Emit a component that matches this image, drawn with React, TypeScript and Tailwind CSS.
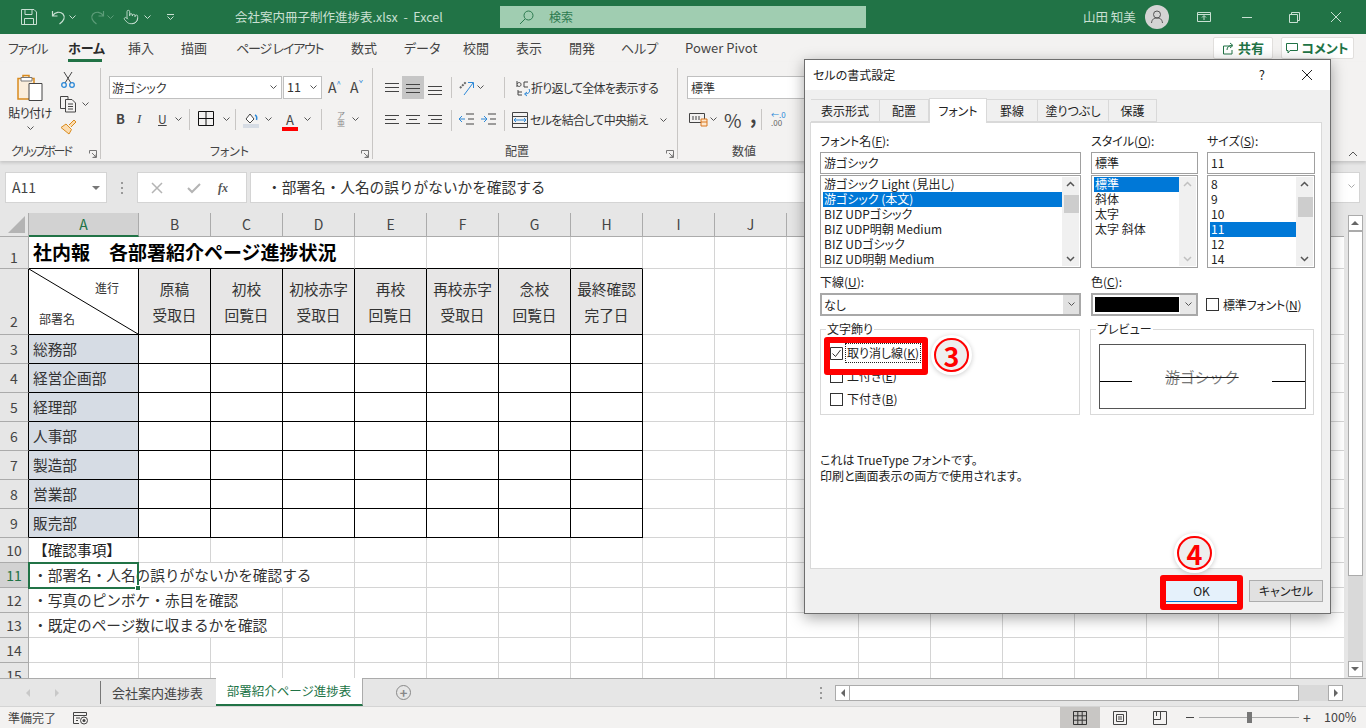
import type { ReactNode } from "react";
import { Pointer } from "lucide-react";

const jpFont = "font-['Noto_Sans_CJK_JP','Noto_Sans',sans-serif]";

// Small dropdown caret used all over the ribbon
const Chev = ({ className = "stroke-[#555]" }: { className?: string }) => (
  <svg width="7" height="5" viewBox="0 0 7 5" fill="none" className={className}>
    <path d="M0.5 0.5 L3.5 3.5 L6.5 0.5" strokeWidth="1" />
  </svg>
);

const Ico = ({ w = 16, h = 16, children }: { w?: number; h?: number; children: ReactNode }) => (
  <svg width={w} height={h} viewBox={`0 0 ${w} ${h}`} fill="none">
    {children}
  </svg>
);

const Lines = ({ ys, xs }: { ys: number[]; xs: [number, number][] }) => (
  <Ico w={16} h={16}>
    {ys.map((y, i) => (
      <path key={y} d={`M${xs[i][0]} ${y}.5H${xs[i][1]}`} stroke="#444" />
    ))}
  </Ico>
);

const TitleBar = () => (
  <div className="flex h-[34px] shrink-0 items-center bg-[#217346] text-[12px] text-[#c9e0d3]">
    <div className="flex w-[500px] items-center">
      <div className="ml-[21px] flex w-[30px]">
        <Ico>
          <path d="M.5.5H13L15.5 3V15.5H.5ZM4 .5V5.5H11V.5M3.5 15.5V9.5H12.5V15.5" stroke="#c9e0d3" />
        </Ico>
      </div>
      <div className="flex w-[38px] items-center gap-[2px]">
        <Ico>
          <path d="M1.5 2V7H6.5M1.5 7C4 3 9 2 12 5C14.5 8 13 12 8.5 15" stroke="#c9e0d3" strokeWidth="1.2" />
        </Ico>
        <Chev className="stroke-[#c9e0d3]" />
      </div>
      <div className="flex w-[34px] items-center gap-[2px]">
        <Ico>
          <path d="M14.5 2V7H9.5M14.5 7C12 3 7 2 4 5C1.5 8 3 12 7.5 15" stroke="#5c9c78" strokeWidth="1.2" />
        </Ico>
        <Chev className="stroke-[#5c9c78]" />
      </div>
      <div className="flex w-[41px] items-center gap-[5px]">
        <Pointer size={16} strokeWidth={1.3} color="#c9e0d3" />
        <Chev className="stroke-[#c9e0d3]" />
      </div>
      <div className="flex w-[13px] flex-col items-center gap-[1px]">
        <div className="h-px w-[7px] bg-[#c9e0d3]" />
        <Chev className="stroke-[#c9e0d3]" />
      </div>
      <div className="ml-[58px] whitespace-pre text-[12.5px]">会社案内冊子制作進捗表.xlsx  -  Excel</div>
    </div>
    <div className="flex h-[22px] w-[366px] items-center bg-[#a0cdb1] pl-[19px] text-[#2c7a4f]">
      <Ico w={15} h={15}>
        <circle cx="9.5" cy="5.5" r="4.5" stroke="#2c7a4f" />
        <path d="M6 9L1 14" stroke="#2c7a4f" />
      </Ico>
      <span className="ml-[15px]">検索</span>
    </div>
    <div className="ml-[217px] w-[62px] text-[12.5px]">山田 知美</div>
    <div className="flex h-[24px] w-[24px] items-center justify-center rounded-full bg-[#d4d4d4]">
      <Ico>
        <circle cx="8" cy="5.5" r="3.5" stroke="#555" />
        <path d="M2.5 14C3 10 5 9 8 9S13 10 13.5 14" stroke="#555" />
      </Ico>
    </div>
    <div className="ml-[28px] flex w-[45px]">
      <Ico w={14} h={14}>
        <path d="M.5 2.5H13.5V11.5H.5ZM.5 4.5H13.5M7 10V6M5 7.5L7 5.5L9 7.5" stroke="#c9e0d3" />
      </Ico>
    </div>
    <div className="h-px w-[10px] bg-[#c9e0d3]" />
    <div className="ml-[37px] flex w-[41px]">
      <Ico w={11} h={11}>
        <path d="M.5 2.5H8.5V10.5H.5ZM2.5 2.5V.5H10.5V8.5H8.5" stroke="#c9e0d3" />
      </Ico>
    </div>
    <Ico w={12} h={12}>
      <path d="M1 1L11 11M11 1L1 11" stroke="#c9e0d3" />
    </Ico>
  </div>
);

const tabs = [
  { t: "ファイル", w: "w-[60px] tracking-[-1.5px]" },
  { t: "ホーム", w: "w-[60px]", on: true },
  { t: "挿入", w: "w-[53px]" },
  { t: "描画", w: "w-[55px]" },
  { t: "ページ レイアウト", w: "w-[115px] tracking-[-1.2px]" },
  { t: "数式", w: "w-[53px]" },
  { t: "データ", w: "w-[59px]" },
  { t: "校閲", w: "w-[53px]" },
  { t: "表示", w: "w-[53px]" },
  { t: "開発", w: "w-[52px]" },
  { t: "ヘルプ", w: "w-[64px]" },
  { t: "Power Pivot", w: "w-[100px]" },
];

const TabBar = () => (
  <div className="flex h-[28px] shrink-0 items-center bg-[#f3f2f1] pl-[8px] text-[13px] text-[#444]">
    {tabs.map((x) => (
      <div key={x.t} className={`${x.w} relative flex h-full items-center whitespace-pre`}>
        <span className={x.on ? "font-bold text-[#2b2b2b]" : ""}>{x.t}</span>
        {x.on && <div className="absolute bottom-0 left-0 h-[3px] w-[34px] bg-[#217346]" />}
      </div>
    ))}
    <div className="ml-[428px] flex h-[22px] w-[60px] items-center justify-center gap-[4px] rounded-[2px] border border-[#e1dfdd] bg-white font-bold text-[#217346]">
      <Ico w={12} h={13}>
        <path d="M9 4H1.5V12H10V8M5 8C5 5 7 3.5 10 3.5M8 1L11 3.5L8 6" stroke="#217346" />
      </Ico>
      共有
    </div>
    <div className="ml-[8px] flex h-[22px] w-[73px] items-center justify-center gap-[3px] rounded-[2px] border border-[#e1dfdd] bg-white font-bold text-[#217346]">
      <Ico w={12} h={12}>
        <path d="M.5 1.5H11.5V8.5H4L2 11V8.5H.5Z" stroke="#217346" />
      </Ico>
      コメント
    </div>
  </div>
);

const RGroup = ({ w, label, labelCls = "", launcher, children }: { w: string; label: string; labelCls?: string; launcher?: boolean; children: ReactNode }) => (
  <div className={`${w} relative flex h-[91px] shrink-0 flex-col border-r border-[#c8c6c4]`}>
    <div className="h-[75px] overflow-hidden">{children}</div>
    <div className={`whitespace-nowrap text-center text-[12px] leading-[16px] text-[#444] ${labelCls}`}>{label}</div>
    {launcher && (
      <div className="absolute bottom-[1px] right-[3px]">
        <Ico w={8} h={8}>
          <path d="M.5 3.5V.5H7.5V7.5H3.5M3 3L7 7M7 4.5V7H4.5" stroke="#777" />
        </Ico>
      </div>
    )}
  </div>
);

const VSep = ({ ml = "" }: { ml?: string }) => <div className={`h-[21px] w-px bg-[#c8c6c4] ${ml}`} />;

const Ribbon = () => (
  <div className="relative flex h-[99px] shrink-0 bg-[#f3f2f1] pt-[6px] shadow-[0_2px_3px_rgba(0,0,0,0.14)]">
    <RGroup w="w-[101px]" label="クリップボード" labelCls="pr-[18px] tracking-[-2px]" launcher>
      <div className="flex">
        <div className="flex w-[60px] flex-col items-center pt-[6px]">
          <Ico w={28} h={28}>
            <path d="M2 4.5H7V1.5H13V4.5H18V25H2Z" stroke="#d98b1e" strokeWidth="1.5" fill="#fbeedb" />
            <path d="M5 3.5H16V7H5Z" fill="#fff" stroke="#777" />
            <path d="M13 9.5H26V26.5H13Z" fill="#fff" stroke="#444" />
          </Ico>
          <div className="mt-[3px] text-[12px] leading-[16px] tracking-[-0.5px] text-[#333]">貼り付け</div>
          <div className="mt-[5px]"><Chev /></div>
        </div>
        <div className="flex flex-col pt-[3px]">
          <Ico w={16} h={18}>
            <path d="M4 1L11 12M12 1L5 12" stroke="#444" />
            <circle cx="4" cy="14" r="2.3" stroke="#2b88d8" strokeWidth="1.3" />
            <circle cx="12" cy="14" r="2.3" stroke="#2b88d8" strokeWidth="1.3" />
          </Ico>
          <div className="mt-[7px] flex items-center gap-[5px]">
            <Ico w={17} h={17}>
              <path d="M5 12.5H.5V.5H8V3M5.5 3.5H12L15.5 7V16H5.5ZM8 8H13M8 10.5H13M8 13H13" stroke="#444" />
            </Ico>
            <Chev />
          </div>
          <div className="mt-[5px]">
            <Ico w={17} h={17}>
              <path d="M9 7L14 2L16 4L11 9M6 6L11.5 11.5L9 16L1 9.5Z" stroke="#d98b1e" fill="#fbdcb0" />
            </Ico>
          </div>
        </div>
      </div>
    </RGroup>

    <RGroup w="w-[272px]" label="フォント" labelCls="pr-[14px]" launcher>
      <div className="flex h-[36px] items-center pl-[8px] pt-[3px]">
        <div className="flex h-[23px] w-[173px] items-center justify-between border border-[#c0c0c0] bg-white pl-[2px] pr-[4px] text-[12px] text-[#333]">
          游ゴシック
          <Chev />
        </div>
        <div className="ml-px flex h-[23px] w-[39px] items-center justify-between border border-[#c0c0c0] bg-white pl-[3px] pr-[4px] text-[12.5px] text-[#333]">
          11
          <Chev />
        </div>
        <div className="ml-[6px] flex w-[22px] items-start text-[14px] leading-[15px] text-[#444]">
          A<span className="text-[8px] leading-[8px] text-[#2b88d8]">^</span>
        </div>
        <div className="flex w-[22px] items-start text-[14px] leading-[15px] text-[#444]">
          A<span className="text-[8px] leading-[8px] text-[#2b88d8]">ˇ</span>
        </div>
      </div>
      <div className="mt-[3px] flex h-[24px] items-center pl-[15px] text-[#444]">
        <span className="w-[21px] text-[13px] font-bold">B</span>
        <span className="w-[21px] font-['Liberation_Serif',serif] text-[13px] italic">I</span>
        <span className="w-[14px] text-[12px] underline">U</span>
        <span className="w-[17px] pl-[3px]"><Chev /></span>
        <VSep />
        <span className="ml-[8px] w-[25px]">
          <Ico>
            <path d="M.5.5H15.5V14.5H.5ZM8 .5V14.5M.5 7.5H15.5" stroke="#111" />
          </Ico>
        </span>
        <span className="w-[12px]"><Chev /></span>
        <VSep />
        <span className="ml-[7px] w-[22px]">
          <Ico h={17}>
            <path d="M3 8L7 3L11 8L7 12Z" stroke="#444" fill="#fff" />
            <path d="M12 4C14 5 14 7 13.5 9" stroke="#2b88d8" strokeWidth="1.5" />
            <path d="M0 13H16V17H0Z" fill="#d6dce4" />
          </Ico>
        </span>
        <span className="w-[17px]"><Chev /></span>
        <span className="relative w-[22px] pl-[4px] text-[13px] leading-[15px]">
          A
          <span className="absolute left-0 top-[15px] h-[4px] w-[16px] bg-[#ff0000]" />
        </span>
        <span className="w-[17px]"><Chev /></span>
        <VSep />
        <span className="ml-[8px] flex w-[22px] flex-col items-center text-[8px] leading-[8px] text-[#888]">
          <span>ア</span>
          <span>亜</span>
        </span>
        <span className="w-[10px]"><Chev /></span>
      </div>
    </RGroup>

    <RGroup w="w-[305px]" label="配置" labelCls="pr-[16px]" launcher>
      <div className="flex h-[36px] items-center pl-[8px] pt-[3px]">
        <span className="flex w-[21px] justify-center"><Lines ys={[3, 7, 11]} xs={[[1, 15], [1, 15], [1, 15]]} /></span>
        <span className="flex h-[23px] w-[22px] items-center justify-center bg-[#c6c6c6]"><Lines ys={[4, 8, 12]} xs={[[1, 15], [1, 15], [1, 15]]} /></span>
        <span className="flex w-[22px] justify-center"><Lines ys={[6, 10, 14]} xs={[[1, 15], [1, 15], [1, 15]]} /></span>
        <VSep ml="ml-[5px]" />
        <span className="ml-[7px] flex w-[45px] items-center gap-[2px]">
          <Ico>
            <path d="M1 8L7 2" stroke="#666" strokeWidth="2" strokeDasharray="2 1" />
            <path d="M5 15L14 3M9 2.5H14.5V8" stroke="#2b88d8" />
          </Ico>
          <Chev />
        </span>
        <VSep />
        <span className="ml-[10px] flex items-center whitespace-nowrap text-[12px] tracking-[-0.7px] text-[#333]">
          <Ico w={16} h={18}>
            <path d="M2 2V8M2 5C3 3 6 3 6 5.5S3 8 2 6M13 3H9V8H13M3 13H7M3 11V16H7" stroke="#444" />
            <path d="M14 10C16 13 13 15 10 15M12 13L9.5 15L12 17" stroke="#2b88d8" />
          </Ico>
          折り返して全体を表示する
        </span>
      </div>
      <div className="mt-[4px] flex h-[24px] items-center pl-[8px]">
        <span className="flex w-[21px] justify-center"><Lines ys={[3, 7, 11]} xs={[[1, 15], [1, 12], [1, 15]]} /></span>
        <span className="flex w-[22px] justify-center"><Lines ys={[3, 7, 11]} xs={[[1, 15], [4, 12], [1, 15]]} /></span>
        <span className="flex w-[22px] justify-center"><Lines ys={[3, 7, 11]} xs={[[1, 15], [4, 15], [1, 15]]} /></span>
        <VSep ml="ml-[5px]" />
        <span className="ml-[7px] flex w-[22px]">
          <Ico>
            <path d="M7 2H15M9 7H15M7 12H15" stroke="#444" />
            <path d="M6 7H0M3 4L0 7L3 10" stroke="#2b88d8" />
          </Ico>
        </span>
        <span className="flex w-[23px]">
          <Ico>
            <path d="M7 2H15M9 7H15M7 12H15" stroke="#444" />
            <path d="M0 7H6M3 4L6 7L3 10" stroke="#2b88d8" />
          </Ico>
        </span>
        <VSep />
        <span className="ml-[7px] flex items-center gap-[2px] whitespace-nowrap text-[12px] tracking-[-0.7px] text-[#333]">
          <Ico w={16} h={16}>
            <path d="M.5.5H15.5V15.5H.5ZM.5 4.5H15.5M.5 11.5H15.5" stroke="#444" />
            <path d="M2 8H14M4 6L2 8L4 10M12 6L14 8L12 10" stroke="#2b88d8" />
          </Ico>
          セルを結合して中央揃え
          <span className="ml-[10px]"><Chev /></span>
        </span>
      </div>
    </RGroup>

    <div className="flex h-[91px] flex-1 flex-col">
      <div className="h-[75px]">
        <div className="flex h-[36px] items-center pl-[9px] pt-[3px]">
          <div className="flex h-[23px] w-[400px] items-center border border-[#c0c0c0] bg-white pl-[3px] text-[12px] text-[#333]">標準</div>
        </div>
        <div className="mt-[3px] flex h-[24px] items-center pl-[11px] text-[#444]">
          <span className="flex w-[35px] items-center gap-[2px]">
            <Ico w={19} h={16}>
              <path d="M.5 2.5H15.5V11.5H.5ZM4 5V9M7 5V9M10 5V9" stroke="#444" />
              <path d="M12 8H18V15H12ZM12 11H18" stroke="#d9761e" fill="#fde8cf" />
            </Ico>
            <Chev />
          </span>
          <span className="w-[26px] text-[19px] leading-none">%</span>
          <span className="-mt-[8px] w-[10px] text-[20px] font-bold leading-none">,</span>
          <VSep ml="ml-[1px]" />
          <span className="ml-[9px] flex flex-col text-[8px] leading-[8px] text-[#666]">
            <span className="text-[#2b88d8]">←.0</span>
            <span>.00</span>
          </span>
        </div>
      </div>
      <div className="w-[132px] text-center text-[12px] leading-[16px] text-[#444]">数値</div>
    </div>
    {/* ribbon collapse */}
    <div className="absolute bottom-[4px] right-[8px]">
      <Ico w={10} h={6}>
        <path d="M1 5L5 1L9 5" stroke="#555" />
      </Ico>
    </div>
  </div>
);

const FormulaBar = () => (
  <div className="flex h-[52px] shrink-0 items-start bg-[#e6e6e6] pt-[11px]">
    <div className="ml-[5px] flex h-[31px] w-[102px] items-center justify-between border border-[#d4d4d4] bg-white pl-[6px] pr-[6px] text-[14px] text-[#444]">
      A11
      <div className="h-0 w-0 border-x-[4px] border-t-[4px] border-x-transparent border-t-[#777]" />
    </div>
    <div className="flex h-[31px] w-[30px] flex-col items-center justify-center gap-[3px]">
      <div className="h-[2px] w-[2px] bg-[#999]" />
      <div className="h-[2px] w-[2px] bg-[#999]" />
      <div className="h-[2px] w-[2px] bg-[#999]" />
    </div>
    <div className="flex h-[31px] w-[110px] items-center border border-[#d4d4d4] bg-white pl-[13px]">
      <Ico w={12} h={12}>
        <path d="M1 1L11 11M11 1L1 11" stroke="#b4b4b4" strokeWidth="1.5" />
      </Ico>
      <span className="ml-[24px]">
        <Ico w={14} h={12}>
          <path d="M1 6L5 10L13 2" stroke="#b4b4b4" strokeWidth="2" />
        </Ico>
      </span>
      <span className="ml-[17px] font-['Liberation_Serif',serif] text-[12px] font-bold italic text-[#555]">fx</span>
    </div>
    <div className="ml-[3px] flex h-[31px] w-[1110px] items-center justify-between border border-[#d4d4d4] bg-white pb-[2px] pl-[16px] pr-[4px] text-[14.67px] text-[#333] [font-feature-settings:normal]">
      ・部署名・人名の誤りがないかを確認する
      <Chev className="stroke-[#aaa]" />
    </div>
  </div>
);

const LINE = "border-black";
const GRID = "border-[#d4d4d4]";
const cols = ["A", "B", "C", "D", "E", "F", "G", "H", "I", "J", "K", "L", "M", "N", "O", "P", "Q", "R"];
const rowGrid = "grid grid-cols-[29px_110px_repeat(17,72px)]";

const headers: [string, string][] = [
  ["原稿", "受取日"],
  ["初校", "回覧日"],
  ["初校赤字", "受取日"],
  ["再校", "回覧日"],
  ["再校赤字", "受取日"],
  ["念校", "回覧日"],
  ["最終確認", "完了日"],
];

const RowHead = ({ n, on, line, cls = "items-center" }: { n: number; on?: boolean; line?: boolean; cls?: string }) => (
  <div
    className={`flex justify-center border-b border-r text-[14px] ${cls} ${line ? "border-r-black" : "border-r-[#ababab]"} border-b-[#ababab] ${
      on ? "bg-[#d2d2d2] text-[#217346]" : "bg-[#e6e6e6] text-[#444]"
    }`}
  >
    {n}
  </div>
);

const Plain = ({ from, to, line }: { from: number; to: number; line?: boolean }) => (
  <>
    {cols.slice(from, to).map((c) => (
      <div key={c} className={`border-b border-r ${line ? LINE : GRID}`} />
    ))}
  </>
);

const depts = ["総務部", "経営企画部", "経理部", "人事部", "製造部", "営業部", "販売部"];
const notes = [
  { n: 11, t: "・部署名・人名の誤りがないかを確認する", span: "col-span-4", rest: 4 },
  { n: 12, t: "・写真のピンボケ・赤目を確認", span: "col-span-3", rest: 3 },
  { n: 13, t: "・既定のページ数に収まるかを確認", span: "col-span-3", rest: 3 },
];

const Sheet = () => (
  <div className="relative w-[1344px] overflow-hidden bg-white text-[14.67px] text-[#222]">
    <div className={`${rowGrid} h-[24px] bg-[#e6e6e6] text-[14px] text-[#444]`}>
      <div className="relative border-b border-r border-[#ababab]">
        <div className="absolute bottom-[3px] right-[3px] h-0 w-0 border-b-[17px] border-l-[17px] border-b-[#b4b4b4] border-l-transparent" />
      </div>
      {cols.map((c) => (
        <div
          key={c}
          className={
            c === "A"
              ? "flex items-center justify-center border-b-2 border-r border-b-[#217346] border-r-[#ababab] bg-[#d2d2d2] text-[#217346]"
              : "flex items-center justify-center border-b border-r border-[#ababab]"
          }
        >
          {c}
        </div>
      ))}
    </div>

    <div className={`${rowGrid} h-[32px]`}>
      <RowHead n={1} cls="items-end" />
      <div className="col-span-4 flex items-center whitespace-nowrap border-b border-r border-b-black border-r-[#d4d4d4] pl-[4px] text-[19px] font-bold text-black">
        社内報　各部署紹介ページ進捗状況
      </div>
      <div className="border-b border-r border-b-black border-r-[#d4d4d4]" />
      <div className="border-b border-r border-b-black border-r-[#d4d4d4]" />
      <div className="border-b border-r border-b-black border-r-[#d4d4d4]" />
      <div className="border-b border-r border-b-black border-r-[#d4d4d4]" />
      <Plain from={8} to={18} />
    </div>

    <div className={`${rowGrid} h-[66px]`}>
      <RowHead n={2} line cls="items-end pb-[2px]" />
      <div className={`relative border-b border-r ${LINE} text-[12px] text-[#333]`}>
        <svg className="absolute inset-0" width="109" height="65">
          <line x1="0" y1="0" x2="109" y2="65" stroke="#000" />
        </svg>
        <span className="absolute right-[19px] top-[10px]">進行</span>
        <span className="absolute left-[10px] top-[41px]">部署名</span>
      </div>
      {headers.map(([a, b]) => (
        <div key={a} className={`flex flex-col items-center justify-center border-b border-r bg-[#e7e6e6] leading-[26px] text-[#333] ${LINE}`}>
          <span>{a}</span>
          <span>{b}</span>
        </div>
      ))}
      <Plain from={8} to={18} />
    </div>

    {depts.map((d, i) => (
      <div key={d} className={`${rowGrid} h-[29px]`}>
        <RowHead n={i + 3} line />
        <div className={`flex items-center border-b border-r bg-[#d6dce4] pl-[4px] text-[#333] ${LINE}`}>{d}</div>
        <Plain from={1} to={8} line />
        <Plain from={8} to={18} />
      </div>
    ))}

    <div className={`${rowGrid} h-[25px]`}>
      <RowHead n={10} />
      <div className={`flex items-center whitespace-nowrap border-b border-r pl-[4px] ${GRID}`}>【確認事項】</div>
      <Plain from={1} to={18} />
    </div>

    {notes.map((r) => (
      <div key={r.n} className={`${rowGrid} h-[25px]`}>
        <RowHead n={r.n} on={r.n === 11} />
        <div className={`${r.span} flex items-center whitespace-nowrap border-b border-r pl-[4px] text-[#333] ${GRID}`}>{r.t}</div>
        <Plain from={r.rest} to={18} />
      </div>
    ))}

    <div className={`${rowGrid} h-[25px]`}>
      <RowHead n={14} />
      <Plain from={0} to={18} />
    </div>
    <div className={`${rowGrid} h-[25px]`}>
      <RowHead n={15} />
      <Plain from={0} to={18} />
    </div>

    {/* active cell A11 */}
    <div className="absolute left-[28px] top-[349px] h-[27px] w-[111px] border-2 border-[#217346]">
      <div className="absolute -bottom-[4px] -right-[4px] h-[6px] w-[6px] border border-white bg-[#217346]" />
    </div>
  </div>
);

const VScroll = () => (
  <div className="flex w-[22px] flex-col items-center bg-[#e6e6e6] pb-[1px] pt-[2px]">
    <div className="flex h-[16px] w-[15px] items-center justify-center border border-[#ababab] bg-white">
      <div className="h-0 w-0 border-x-[4px] border-b-[4px] border-x-transparent border-b-[#666]" />
    </div>
    <div className="h-[345px] w-[15px] border border-[#ababab] bg-white" />
    <div className="w-[15px] flex-1 bg-[#d9d9d9]" />
    <div className="flex h-[16px] w-[15px] items-center justify-center border border-[#ababab] bg-white">
      <div className="h-0 w-0 border-x-[4px] border-t-[4px] border-x-transparent border-t-[#666]" />
    </div>
  </div>
);

const SheetTabs = () => (
  <div className="flex h-[28px] shrink-0 items-stretch border-t border-[#ababab] bg-[#e6e6e6] text-[12.5px]">
    <div className="flex w-[100px] items-center pl-[26px]">
      <div className="h-0 w-0 border-y-[4px] border-r-[4px] border-y-transparent border-r-[#c8c8c8]" />
      <div className="ml-[25px] h-0 w-0 border-y-[4px] border-l-[4px] border-y-transparent border-l-[#c8c8c8]" />
    </div>
    <div className="my-[2px] flex w-[116px] items-center border-l border-[#777] pl-[11px] text-[13px] text-[#444]">会社案内進捗表</div>
    <div className="-mt-px flex w-[147px] items-center justify-center border-b-2 border-r border-[#217346] border-r-[#ababab] bg-white text-[#217346]">部署紹介ページ進捗表</div>
    <div className="ml-[33px] flex w-[416px] items-center">
      <div className="flex h-[15px] w-[15px] items-center justify-center rounded-full border border-[#888] text-[13px] font-bold leading-none text-[#888]">+</div>
    </div>
    <div className="flex w-[17px] flex-col items-center justify-center gap-[3px]">
      <div className="h-[2px] w-[2px] bg-[#999]" />
      <div className="h-[2px] w-[2px] bg-[#999]" />
      <div className="h-[2px] w-[2px] bg-[#999]" />
    </div>
    <div className="ml-[6px] flex h-[16px] w-[508px] self-center">
      <div className="flex w-[15px] items-center justify-center border border-[#ababab] bg-white">
        <div className="h-0 w-0 border-y-[4px] border-r-[4px] border-y-transparent border-r-[#666]" />
      </div>
      <div className="w-[449px] border border-l-0 border-[#ababab] bg-white" />
      <div className="flex-1 bg-[#d9d9d9]" />
      <div className="flex w-[15px] items-center justify-center border border-[#ababab] bg-white">
        <div className="h-0 w-0 border-y-[4px] border-l-[4px] border-y-transparent border-l-[#666]" />
      </div>
    </div>
  </div>
);

const StatusBar = () => (
  <div className="flex h-[22px] shrink-0 items-center border-t border-[#d4d4d4] bg-[#f3f2f1] text-[12px] text-[#444]">
    <span className="ml-[8px] w-[65px]">準備完了</span>
    <Ico w={16} h={14}>
      <path d="M.5 1.5H13.5V4.5H.5ZM.5 4.5V12.5H6M3 7H7M3 9.5H5" stroke="#444" />
      <circle cx="11" cy="9.5" r="3.5" stroke="#444" />
      <circle cx="11" cy="9.5" r="1.5" fill="#444" />
    </Ico>
    <div className="ml-[971px] flex h-full w-[40px] items-center justify-center bg-[#c8c6c4]">
      <Ico w={14} h={14}>
        <path d="M.5.5H13.5V13.5H.5ZM.5 4.8H13.5M.5 9.2H13.5M4.8.5V13.5M9.2.5V13.5" stroke="#333" />
      </Ico>
    </div>
    <div className="flex w-[40px] justify-center">
      <Ico w={14} h={14}>
        <path d="M.5.5H13.5V13.5H.5ZM3.5 3.5H10.5V10.5H3.5ZM5 6H9M5 8H9" stroke="#444" />
      </Ico>
    </div>
    <div className="flex w-[40px] justify-center">
      <Ico w={14} h={14}>
        <path d="M.5.5H13.5V13.5H.5ZM.5 8.5H7.5V.5M3.5 .5V5" stroke="#444" />
      </Ico>
    </div>
    <div className="ml-[6px] h-px w-[8px] bg-[#444]" />
    <div className="relative ml-[5px] h-px w-[100px] bg-[#aaa]">
      <div className="absolute -top-[5px] left-[48px] h-[11px] w-[5px] bg-[#777]" />
    </div>
    <span className="w-[16px] text-center text-[14px] leading-none">+</span>
    <span className="ml-[9px] text-[12.5px]">100%</span>
  </div>
);

const ListBox = ({ items, sel, thumb, w, dim }: { items: string[]; sel: number; thumb: string; w: string; dim?: boolean }) => (
  <div className={`${w} mt-px flex h-[93px] border border-[#a0a0a0] bg-white p-px`}>
    <div className="min-w-0 flex-1 pl-px">
      {items.map((x, i) => (
        <div key={x} className={`h-[15px] whitespace-pre pl-[1px] leading-[14px] ${i === sel ? "bg-[#0078d7] text-white" : ""}`}>
          {x}
        </div>
      ))}
    </div>
    <div className="flex w-[17px] flex-col items-center justify-between bg-[#f0f0f0] py-[4px]">
      <svg width="9" height="6" viewBox="0 0 9 6" fill="none"><path d="M1 5L4.5 1.5L8 5" stroke={dim ? "#c0c0c0" : "#555"} strokeWidth="1.5" /></svg>
      <svg width="9" height="6" viewBox="0 0 9 6" fill="none"><path d="M1 1L4.5 4.5L8 1" stroke={dim ? "#c0c0c0" : "#555"} strokeWidth="1.5" /></svg>
    </div>
    {!dim && <div className={`absolute ${thumb} w-[15px] bg-[#cdcdcd]`} />}
  </div>
);

const CheckRow = ({ label, cls = "" }: { label: ReactNode; cls?: string }) => (
  <div className={`flex items-center ${cls}`}>
    <div className="h-[13px] w-[13px] border border-[#333] bg-white" />
    <span className="ml-[3px] pl-[1px]">{label}</span>
  </div>
);

const dlgTabs = [
  { t: "表示形式", w: "w-[69px]" },
  { t: "配置", w: "w-[49px]" },
  { t: "フォント", w: "w-[58px]", on: true },
  { t: "罫線", w: "w-[51px]" },
  { t: "塗りつぶし", w: "w-[71px]" },
  { t: "保護", w: "w-[48px]" },
];

const Dialog = () => (
  <div className="absolute left-[804px] top-[59px] flex h-[555px] w-[527px] flex-col border border-[#6e6e6e] bg-[#f0f0f0] text-[12px] text-[#222] shadow-[0_4px_14px_rgba(0,0,0,0.35)]">
    <div className="flex h-[30px] shrink-0 items-center bg-white pl-[8px]">
      <span>セルの書式設定</span>
      <span className="ml-auto text-[13px]">?</span>
      <span className="ml-[36px] mr-[17px]">
        <Ico w={12} h={12}>
          <path d="M1 1L11 11M11 1L1 11" stroke="#222" />
        </Ico>
      </span>
    </div>
    <div className="flex h-[32px] shrink-0 items-end pl-[6px]">
      {dlgTabs.map((x) => (
        <div
          key={x.t}
          className={
            x.on
              ? `${x.w} relative z-10 -mb-px flex h-[25px] items-center justify-center border border-b-0 border-[#d9d9d9] bg-white`
              : `${x.w} flex h-[23px] items-center justify-center border border-l-0 border-[#d9d9d9] bg-[#f0f0f0]`
          }
        >
          {x.t}
        </div>
      ))}
    </div>
    <div className="ml-[5px] h-[447px] w-[512px] border border-[#d9d9d9] bg-white pl-[9px] pt-[10px]">
      <div className="flex gap-[10px]">
        <div className="w-[261px]">
          <div className="h-[16px] leading-[15px]">フォント名(<u>F</u>):</div>
          <div className="mt-[3px] flex h-[22px] items-center border border-[#a0a0a0] pl-[3px]">游ゴシック</div>
          <div className="relative">
            <ListBox
              w="w-[261px]"
              sel={1}
              thumb="right-[2px] top-[20px] h-[18px]"
              items={["游ゴシック Light (見出し)", "游ゴシック (本文)", "BIZ UDPゴシック", "BIZ UDP明朝 Medium", "BIZ UDゴシック", "BIZ UD明朝 Medium"]}
            />
          </div>
        </div>
        <div className="w-[107px]">
          <div className="h-[16px] leading-[15px]">スタイル(<u>O</u>):</div>
          <div className="mt-[3px] flex h-[22px] items-center border border-[#a0a0a0] pl-[3px]">標準</div>
          <ListBox w="w-[107px]" sel={0} thumb="" dim items={["標準", "斜体", "太字", "太字 斜体"]} />
        </div>
        <div className="ml-[-1px] w-[108px]">
          <div className="h-[16px] leading-[15px]">サイズ(<u>S</u>):</div>
          <div className="mt-[3px] flex h-[22px] items-center border border-[#a0a0a0] pl-[3px]">11</div>
          <div className="relative">
            <ListBox w="w-[108px]" sel={3} thumb="right-[2px] top-[22px] h-[20px]" items={["8", "9", "10", "11", "12", "14"]} />
          </div>
        </div>
      </div>

      <div className="mt-[6px] flex gap-[10px]">
        <div className="w-[261px]">
          <div className="h-[16px] leading-[15px]">下線(<u>U</u>):</div>
          <div className="mt-[3px] flex h-[23px] items-center justify-between border-2 border-[#a8a8a8] pl-[2px]">
            なし
            <span className="flex h-full w-[16px] items-center justify-center bg-[#e1e1e1]"><Chev /></span>
          </div>
        </div>
        <div className="w-[107px]">
          <div className="h-[16px] leading-[15px]">色(<u>C</u>):</div>
          <div className="mt-[3px] flex h-[23px] items-center justify-between border-2 border-[#a8a8a8] pl-[2px]">
            <span className="h-[15px] w-[84px] bg-black" />
            <span className="flex h-full w-[16px] items-center justify-center bg-[#e8e8e8]"><Chev /></span>
          </div>
        </div>
        <CheckRow cls="-ml-[2px] mt-[19px] h-[23px] tracking-[-0.2px]" label={<>標準フォント(<u>N</u>)</>} />
      </div>

      <div className="mt-[13px] flex gap-[10px]">
        <div className="relative h-[86px] w-[260px] border border-[#d9d9d9]">
          <span className="absolute -top-[8px] left-[5px] bg-white px-[1px] leading-[14px]">文字飾り</span>
          <div className="pl-[9px] pt-[14px]">
            <div className="flex h-[18px] items-center">
              <svg width="13" height="13" viewBox="0 0 13 13" fill="none">
                <path d="M.5.5H12.5V12.5H.5Z" stroke="#333" />
                <path d="M2.5 6.5L5.5 9.5L10.5 3" stroke="#333" />
              </svg>
              <span className="ml-[2px] border border-dotted border-[#222] px-px">取り消し線(<u>K</u>)</span>
            </div>
            <CheckRow cls="mt-[6px] h-[16px]" label={<>上付き(<u>E</u>)</>} />
            <CheckRow cls="mt-[7px] h-[16px]" label={<>下付き(<u>B</u>)</>} />
          </div>
        </div>
        <div className="relative h-[86px] w-[224px] border border-[#d9d9d9]">
          <span className="absolute -top-[8px] left-[5px] bg-white px-[1px] leading-[14px]">プレビュー</span>
          <div className="ml-[8px] mt-[14px] flex h-[65px] w-[207px] items-center justify-between border border-[#555] text-[14.67px] text-[#777] [font-feature-settings:normal]">
            <span className="mt-[10px] h-px w-[32px] bg-black" />
            <span className="line-through decoration-[#222]">游ゴシック</span>
            <span className="mt-[10px] h-px w-[33px] bg-black" />
          </div>
        </div>
      </div>

      <div className="mt-[37px] leading-[16px]">
        <div>これは TrueType フォントです。</div>
        <div>印刷と画面表示の両方で使用されます。</div>
      </div>
    </div>
    <div className="flex flex-1 items-start justify-end gap-[11px] pr-[7px] pt-[11px]">
      <div className="flex h-[22px] w-[73px] items-center justify-center border border-[#0078d7] bg-[#e5f1fb]">OK</div>
      <div className="flex h-[22px] w-[74px] items-center justify-center border border-[#adadad] bg-[#e1e1e1]">キャンセル</div>
    </div>
  </div>
);

const Badge = ({ n, cls }: { n: string; cls: string }) => (
  <div className={`absolute flex h-[34px] w-[35px] items-center justify-center rounded-full border-2 border-[#ff0000] bg-[#eeeeee] text-[27px] font-bold leading-none text-[#ff0000] shadow-[0_0_0_3px_#fff,0_1px_5px_3px_rgba(0,0,0,0.2)] ${cls}`}>
    {n}
  </div>
);

export default function App() {
  return (
    <div className={`relative flex h-[728px] w-[1366px] flex-col overflow-hidden bg-[#e6e6e6] [font-feature-settings:'palt'] ${jpFont}`}>
      <TitleBar />
      <TabBar />
      <Ribbon />
      <FormulaBar />
      <div className="flex h-[465px] shrink-0 [font-feature-settings:normal]">
        <Sheet />
        <VScroll />
      </div>
      <SheetTabs />
      <StatusBar />
      <Dialog />
      {/* tutorial annotations */}
      <div className="absolute left-[824px] top-[337px] h-[38px] w-[104px] rounded-[3px] border-[6px] border-[#ff0000]" />
      <div className="absolute left-[1160px] top-[575px] h-[35px] w-[83px] rounded-[3px] border-[6px] border-[#ff0000]" />
      <Badge n="3" cls="left-[934px] top-[338px]" />
      <Badge n="4" cls="left-[1177px] top-[536px]" />
    </div>
  );
}
